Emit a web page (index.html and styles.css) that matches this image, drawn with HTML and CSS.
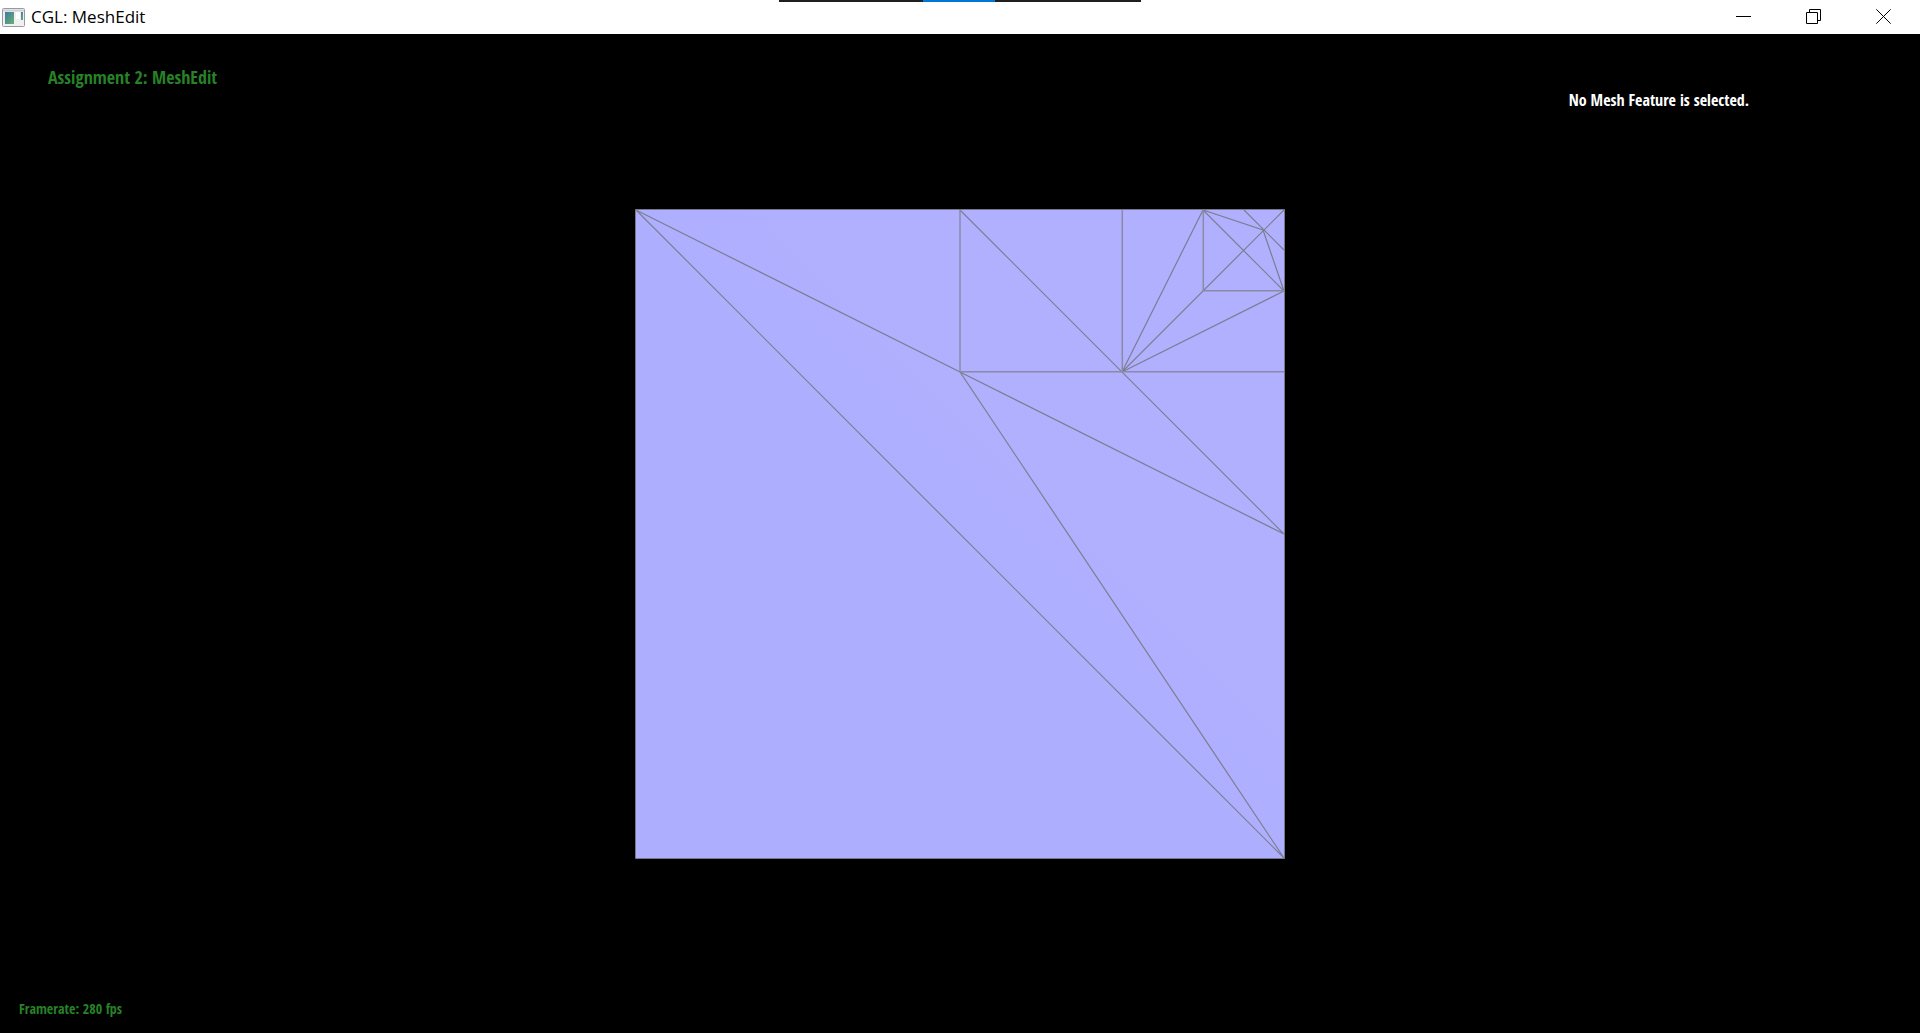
FILE: index.html
```html
<!DOCTYPE html>
<html lang="en">
<head>
<meta charset="utf-8">
<title>CGL: MeshEdit</title>
<link rel="stylesheet" href="styles.css">
</head>
<body>
<div class="window">
  <header class="titlebar">
    <svg class="app-icon" viewBox="0 0 23 19" aria-hidden="true">
      <defs>
        <linearGradient id="pane" x1="0" y1="0" x2="1" y2="1">
          <stop offset="0" stop-color="#44799c"/><stop offset="1" stop-color="#62b375"/>
        </linearGradient>
      </defs>
      <rect x=".5" y=".5" width="22" height="18" rx="1" fill="#f0f0f1" stroke="#969ba3"/>
      <path d="M1 2.5h21" stroke="#cdd1d9" stroke-width="2"/>
      <rect x="3" y="4" width="9" height="12" fill="url(#pane)"/>
      <rect x="14" y="4" width="4" height="7" fill="#fff"/>
      <rect x="19" y="4" width="2" height="8" fill="url(#pane)"/>
    </svg>
    <h1 class="title">CGL: MeshEdit</h1>
    <div class="controls">
      <button class="control" type="button" aria-label="Minimize">
        <svg viewBox="0 0 15 15"><path d="M0 7.5h15"/></svg>
      </button>
      <button class="control" type="button" aria-label="Restore">
        <svg viewBox="0 0 15 15"><path d="M.5 3.5h11v11H.5zM3.5 3.5v-3h11v11h-3"/></svg>
      </button>
      <button class="control" type="button" aria-label="Close">
        <svg viewBox="0 0 15 15"><path d="M.3.3l14.4 14.4M14.7.3L.3 14.7"/></svg>
      </button>
    </div>
    <div class="share-strip"></div>
  </header>
  <main class="viewport">
    <svg class="mesh" viewBox="0 0 1920 999" role="img" aria-label="Triangle mesh">
      <defs>
        <linearGradient id="shade" x1="0" y1="1" x2="1" y2="0">
          <stop offset=".48" stop-color="#aeaeff"/><stop offset=".62" stop-color="#b1b0ff"/>
        </linearGradient>
      </defs>
      <rect x="635.5" y="175.5" width="649" height="649" fill="url(#shade)"/>
      <g class="edges">
        <path class="outline" d="M635.5 175.5H1284.5V824.5H635.5z"/>
        <path d="M636 176L1284 824M636 176L960 338L1284 824M960 338L1284 500M960 176L1284 500"/>
        <path d="M1122 338L1203 176L1263 196L1284 257L1122 338L1284 176M1203 176L1284 257M1244 176L1284 216"/>
        <path class="axis" d="M960 176V337.7M1122.3 176V337.7M1203.3 176V256.7H1284M960 337.7H1284"/>
      </g>
    </svg>
    <p class="assignment">Assignment 2: MeshEdit</p>
    <p class="selection">No Mesh Feature is selected.</p>
    <p class="framerate">Framerate: 280 fps</p>
  </main>
</div>
</body>
</html>
```
FILE: styles.css
```css
* { box-sizing: border-box; }

body {
  margin: 0;
  background: #000;
}

.window {
  display: flex;
  flex-direction: column;
  height: 100vh;
}

.titlebar {
  position: relative;
  display: flex;
  align-items: center;
  flex: none;
  height: 34px;
  padding-left: 2px;
  background: #fff;
  color: #000;
}

.app-icon {
  width: 23px;
  height: 19px;
}

.title {
  margin: 0 0 0 6px;
  font: 400 17px/24px "Segoe UI", "Open Sans", sans-serif;
}

.controls {
  display: flex;
  gap: 1px;
  margin-left: auto;
  margin-right: 2px;
}

.control {
  display: grid;
  place-items: center;
  width: 69px;
  height: 34px;
  padding: 0 0 1px;
  border: 0;
  background: none;
}

.control svg {
  width: 15px;
  height: 15px;
  fill: none;
  stroke: #000;
}

/* Screen-sharing handle that hangs over the top edge */
.share-strip {
  position: absolute;
  top: 0;
  left: 50%;
  width: 362px;
  height: 2px;
  transform: translateX(-50%);
  background: linear-gradient(90deg, #1f1f1f 144px, #0078d7 144px 216px, #1f1f1f 216px);
}

.viewport {
  position: relative;
  flex: 1;
  min-height: 0;
  font-family: "Open Sans Condensed", "Open Sans", sans-serif;
  font-weight: 700;
}

.viewport p {
  position: absolute;
  margin: 0;
  white-space: nowrap;
}

.mesh {
  display: block;
  width: 100%;
  height: 100%;
}

.edges {
  fill: none;
  stroke: #7d7d92;
  stroke-width: 1.2;
}

.edges .outline {
  stroke: #77778c;
  stroke-width: 1;
}

.edges .axis {
  stroke: #8a8aa6;
  stroke-width: 1.5;
}

.viewport .assignment {
  top: 31px;
  left: 48px;
  color: #278227;
  font-size: 18px;
  line-height: 24px;
}

.viewport .selection {
  top: 56px;
  right: 171px;
  color: #fff;
  font-size: 16px;
  line-height: 20px;
}

.viewport .framerate {
  bottom: 15px;
  left: 19px;
  color: #278227;
  font-size: 14px;
  line-height: 18px;
}
```
